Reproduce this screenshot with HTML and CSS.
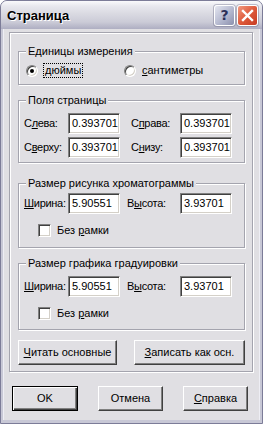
FILE: index.html
```html
<!DOCTYPE html>
<html>
<head>
<meta charset="utf-8">
<title>Страница</title>
<link rel="stylesheet" href="styles.css">
</head>
<body>
<div class="window">
  <div class="titlebar">
    <span class="title">Страница</span>
    <span class="capbtn help">?</span>
    <span class="capbtn close"><svg width="13" height="13" viewBox="0 0 13 13"><path d="M2 2L11 11M11 2L2 11" stroke="#fff" stroke-width="2.4" stroke-linecap="square"/></svg></span>
  </div>
  <div class="client">
    <div class="panel">
      <fieldset class="group g-units">
        <legend>Единицы измерения</legend>
        <div class="radios">
          <div class="radio"><span class="rb on"></span><span class="focus"><u>д</u>юймы</span></div>
          <div class="radio"><span class="rb"></span><span><u>с</u>антиметры</span></div>
        </div>
      </fieldset>

      <fieldset class="group g-margins">
        <legend>Поля страницы</legend>
        <div class="fields">
          <span class="lbl">С<u>л</u>ева:</span><span class="edit">0.393701</span>
          <span class="lbl lbl2">С<u>п</u>рава:</span><span class="edit">0.393701</span>
          <span class="lbl">С<u>в</u>ерху:</span><span class="edit">0.393701</span>
          <span class="lbl lbl2">С<u>н</u>изу:</span><span class="edit">0.393701</span>
        </div>
      </fieldset>

      <fieldset class="group g-chrom">
        <legend>Размер рисунка хроматограммы</legend>
        <div class="fields">
          <span class="lbl"><u>Ш</u>ирина:</span><span class="edit">5.90551</span>
          <span class="lbl lbl3">В<u>ы</u>сота:</span><span class="edit">3.93701</span>
        </div>
        <div class="check"><span class="cb"></span><span>Без <u>р</u>амки</span></div>
      </fieldset>

      <fieldset class="group g-calib">
        <legend>Размер графика градуировки</legend>
        <div class="fields">
          <span class="lbl"><u>Ш</u>ирина:</span><span class="edit">5.90551</span>
          <span class="lbl lbl3">В<u>ы</u>сота:</span><span class="edit">3.93701</span>
        </div>
        <div class="check"><span class="cb"></span><span>Без <u>р</u>амки</span></div>
      </fieldset>

      <div class="panel-btns">
        <button class="btn w-read"><u>Ч</u>итать основные</button>
        <button class="btn w-save"><u>З</u>аписать как осн.</button>
      </div>
    </div>

    <div class="footer">
      <button class="btn default w-ok">OK</button>
      <button class="btn w-cancel">Отмена</button>
      <button class="btn w-help"><u>С</u>правка</button>
    </div>
  </div>
</div>
</body>
</html>
```

FILE: styles.css
```css
* {box-sizing: border-box;}
body {margin: 0; background: #fff; font: 11px/13px "Liberation Sans", Arial, sans-serif; color: #000;}
u {text-decoration: underline; text-underline-offset: 1px;}

/* window frame */
.window {width: 263px; height: 424px; display: flex; flex-direction: column; border: 1px solid #7c7c98; border-radius: 7px 7px 0 0; overflow: hidden;
  background: #c8c8d6;}
.titlebar {height: 28px; flex: none; display: flex; align-items: center; padding: 0 4px 0 6px; gap: 2px;
  background: linear-gradient(#fafafc 0%, #e8e8ee 18%, #dadae2 45%, #cbcbd7 75%, #aeaec2 100%);}
.title {flex: 1; font: bold 13px/16px "Liberation Sans", Arial, sans-serif; color: #000; text-shadow: 1px 1px 0 #fff; padding-top: 1px;}
.capbtn {width: 21px; height: 21px; display: flex; align-items: center; justify-content: center; border: 1px solid #fff; border-radius: 3px;
  box-shadow: 0 0 0 1px rgba(90,90,120,.35);}
.help {background: linear-gradient(135deg, #e4e6f0 0%, #b4b8cf 55%, #8c90ad 100%); color: #2c3058; font: bold 14px/1 "DejaVu Sans", sans-serif;}
.close {background: linear-gradient(135deg, #f29a80 0%, #de5a3c 50%, #c63a22 100%);}

.client {flex: 1; margin: 0 3px 3px; background: #e0dfe3; padding: 3px 6px 0 5px; display: flex; flex-direction: column;
  box-shadow: -1px 0 0 #eeeef4, 1px 0 0 #eeeef4;}

/* etched panel */
.panel {height: 340px; border: 1px solid #a4a4ae; box-shadow: inset 1px 1px 0 #fff, 1px 1px 0 #fff; padding: 12px 7px 0 8px;
  display: flex; flex-direction: column;}

.group {margin: 0; min-width: 0; border: 1px solid #a4a4ae; box-shadow: inset 1px 1px 0 #fff, 1px 1px 0 #fff; padding: 0 0 0 5px;}
.group legend {margin-left: 2px; padding: 0 2px; background: #e0dfe3; line-height: 13px;}

.g-units {padding-top: 6px; padding-bottom: 7px;}
.g-margins {margin-top: 9px; padding-top: 6px; padding-bottom: 4px;}
.g-chrom {margin-top: 14px; padding-top: 3px; padding-bottom: 10px;}
.g-calib {margin-top: 9px; padding-top: 6px; padding-bottom: 9px;}

/* radios */
.radios {display: grid; grid-template-columns: 98px 98px; padding-left: 2px;}
.radio {display: flex; align-items: center; gap: 6px; height: 13px;}
.rb {width: 12px; height: 12px; border-radius: 50%; flex: none; background: #fff; border: 1px solid; border-color: #808080 #fff #fff #808080;
  box-shadow: inset 1px 1px 0 #404040, inset -1px -1px 0 #d4d0c8; display: flex; align-items: center; justify-content: center;}
.rb.on::after {content: ""; width: 4px; height: 4px; border-radius: 50%; background: #000;}
.focus {outline: 1px dotted #000; outline-offset: 0; padding: 0 1px;}

/* edit fields */
.fields {display: grid; grid-template-columns: 44px 52px 60px 52px; row-gap: 3px; align-items: center;}
.lbl {white-space: nowrap; letter-spacing: -0.3px;}
.lbl2 {padding-left: 11px;}
.lbl3 {padding-left: 7px;}
.edit {height: 21px; background: #fff; border: 1px solid; border-color: #808080 #fff #fff #808080;
  box-shadow: inset 1px 1px 0 #404040, inset -1px -1px 0 #d4d0c8; padding: 0 0 0 3px; line-height: 19px;}

/* checkbox */
.check {display: flex; align-items: center; gap: 6px; margin: 10px 0 0 14px; height: 13px;}
.cb {width: 13px; height: 13px; flex: none; background: #fff; border: 1px solid; border-color: #808080 #fff #fff #808080;
  box-shadow: inset 1px 1px 0 #404040, inset -1px -1px 0 #d4d0c8;}

/* buttons */
.btn {height: 25px; padding: 0; background: #e0dfe3; font: 11px/13px "Liberation Sans", Arial, sans-serif; color: #000;
  border: 1px solid; border-color: #fff #404040 #404040 #fff; box-shadow: inset -1px -1px 0 #808080;}
.btn.default {border-color: #000; box-shadow: inset 1px 1px 0 #fff, inset -1px -1px 0 #404040, inset -2px -2px 0 #808080;}
.panel-btns {display: flex; gap: 17px; margin-top: 10px;}
.w-read {width: 99px;}
.w-save {width: 111px;}
.footer {display: flex; gap: 20px; margin-top: 14px; padding-left: 3px;}
.w-ok {width: 66px;}
.w-cancel, .w-help {width: 65px;}
```
